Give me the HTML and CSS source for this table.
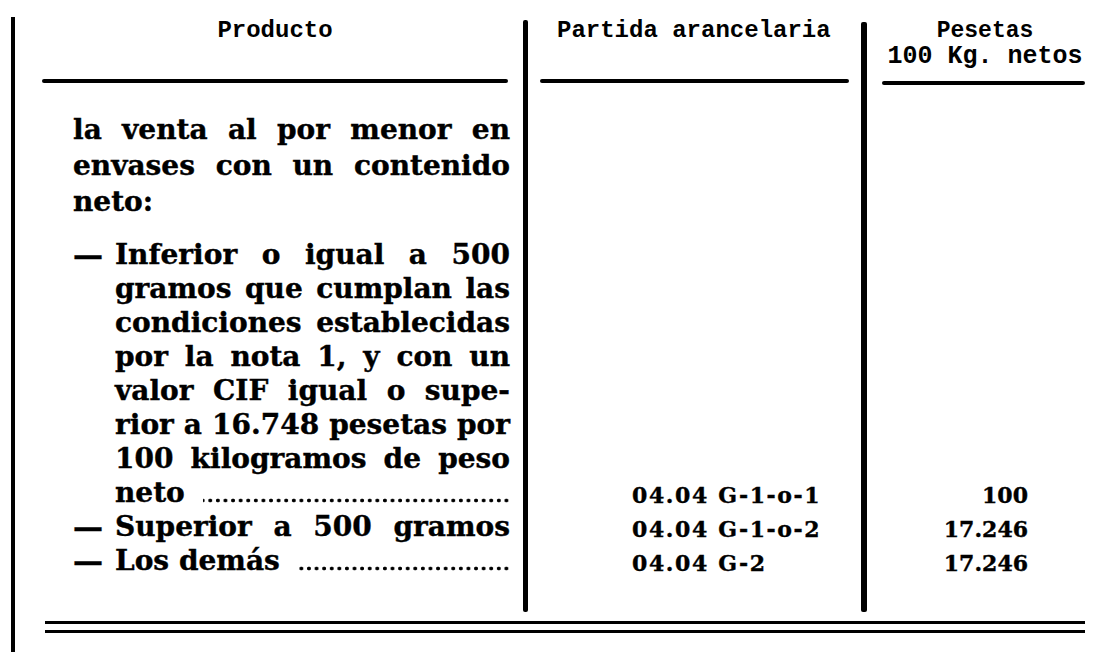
FILE: index.html
```html
<!DOCTYPE html>
<html lang="es">
<head>
<meta charset="utf-8">
<title>Producto — Partida arancelaria — Pesetas</title>
<link rel="stylesheet" href="styles.css">
</head>
<body>
<div class="sheet">
  <div class="frame">
    <div class="table">
      <div class="col c1">
        <div class="head"><span class="h-mono">Producto</span></div>
        <div class="rule"></div>
        <div class="body">
          <div class="blk1">
            <div class="l j">la venta al por menor en</div>
            <div class="l j">envases con un contenido</div>
            <div class="l">neto:</div>
          </div>
          <div class="blk2">
            <div class="item">
              <span class="dash">—</span>
              <div class="itext">
                <div class="l j">Inferior o igual a 500</div>
                <div class="l j">gramos que cumplan las</div>
                <div class="l j">condiciones establecidas</div>
                <div class="l j">por la nota 1, y con un</div>
                <div class="l j">valor CIF igual o supe-</div>
                <div class="l j">rior a 16.748 pesetas por</div>
                <div class="l j">100 kilogramos de peso</div>
                <div class="l lead"><span class="lt">neto</span><span class="dots"></span></div>
              </div>
            </div>
            <div class="item">
              <span class="dash">—</span>
              <div class="itext">
                <div class="l j">Superior a 500 gramos</div>
              </div>
            </div>
            <div class="item">
              <span class="dash">—</span>
              <div class="itext">
                <div class="l lead"><span class="lt">Los demás</span><span class="dots"></span></div>
              </div>
            </div>
          </div>
        </div>
      </div>
      <div class="vline v1"></div>
      <div class="col c2">
        <div class="head"><span class="h-mono">Partida arancelaria</span></div>
        <div class="rule"></div>
        <div class="body">
          <div class="l code">04.04 G-1-o-1</div>
          <div class="l code">04.04 G-1-o-2</div>
          <div class="l code">04.04 G-2</div>
        </div>
      </div>
      <div class="vline v2"></div>
      <div class="col c3">
        <div class="head">
          <div class="h-small">Pesetas</div>
          <div class="h-big">100 Kg. netos</div>
        </div>
        <div class="rule"></div>
        <div class="body">
          <div class="l num">100</div>
          <div class="l num">17.246</div>
          <div class="l num">17.246</div>
        </div>
      </div>
    </div>
    <div class="double"><div class="dl"></div><div class="dl"></div></div>
  </div>
</div>
</body>
</html>
```

FILE: styles.css
```css
html, body {
  margin: 0;
  padding: 0;
  background: #fff;
  color: #000;
}

body {
  overflow: hidden;
  font-family: "DejaVu Serif", serif;
}

.sheet {
  padding: 17px 0 0 11px;
}

.frame {
  border-left: 4px solid #000;
  min-height: 635px;
  box-sizing: border-box;
}

.table {
  display: grid;
  grid-template-columns: 508px 5px 333px 6px 1fr;
}

.col {
  display: flex;
  flex-direction: column;
}

.head {
  height: 62px;
  box-sizing: border-box;
  padding-top: 2px;
  flex: none;
}

.h-mono {
  font-family: "Liberation Mono", monospace;
  font-weight: 700;
  font-size: 24px;
  line-height: 24px;
  display: inline-block;
}

.rule {
  height: 4px;
  background: #000;
  border-radius: 2px;
  flex: none;
}

.vline {
  background: #000;
  border-radius: 2px;
}

.v1 { margin-top: 3px; }
.v2 { margin-top: 5px; }

/* column 1 */
.c1 .head {
  text-align: center;
  padding-left: 12px;
}

.c1 .rule {
  margin: 0 15px 0 27px;
}

.c1 .body {
  padding: 29px 13px 34px 58px;
  font-size: 28px;
  font-weight: 700;
  -webkit-text-stroke: 0.4px #000;
}

.l {
  line-height: 34px;
  height: 34px;
}

.blk1 .l {
  line-height: 36px;
  height: 36px;
}

.blk2 {
  margin-top: 18px;
}

.j {
  text-align: justify;
  text-align-last: justify;
}

.item {
  display: flex;
}

.dash {
  flex: none;
  width: 42px;
  font-size: 30px;
  line-height: 34px;
  height: 34px;
}

.itext {
  flex: 1;
  min-width: 0;
}

.lead {
  display: flex;
}

.lt {
  flex: none;
}

.dots {
  flex: 1;
  min-width: 0;
  margin-left: 18px;
  background-image: radial-gradient(circle at center, #000 0, #000 1.6px, transparent 2.2px);
  background-size: 7.6px 5px;
  background-repeat: repeat-x;
  background-position: right 0 top 22px;
}

/* column 2 */
.c2 .head {
  padding-left: 29px;
}

.c2 .rule {
  margin: 0 12px;
}

.c2 .body,
.c3 .body {
  flex: 1;
  display: flex;
  flex-direction: column;
  justify-content: flex-end;
  padding-bottom: 32px;
  font-size: 22px;
  font-weight: 700;
  -webkit-text-stroke: 0.4px #000;
}

.c2 .body {
  padding-left: 104px;
}

.code {
  letter-spacing: 1.6px;
}

/* column 3 */
.c3 .head {
  text-align: center;
}

.h-small {
  font-family: "Liberation Mono", monospace;
  font-weight: 700;
  font-size: 23px;
  line-height: 24px;
}

.h-big {
  font-family: "Liberation Mono", monospace;
  font-weight: 700;
  font-size: 25px;
  line-height: 28px;
}

.c3 .rule {
  margin: 2px 18px 0 15px;
}

.c3 .body {
  text-align: right;
  padding-right: 75px;
}

/* bottom double rule */
.double {
  margin: 9px 0 0 30px;
  width: 1040px;
}

.dl {
  height: 3px;
  background: #000;
}

.dl + .dl {
  margin-top: 6px;
}
```
